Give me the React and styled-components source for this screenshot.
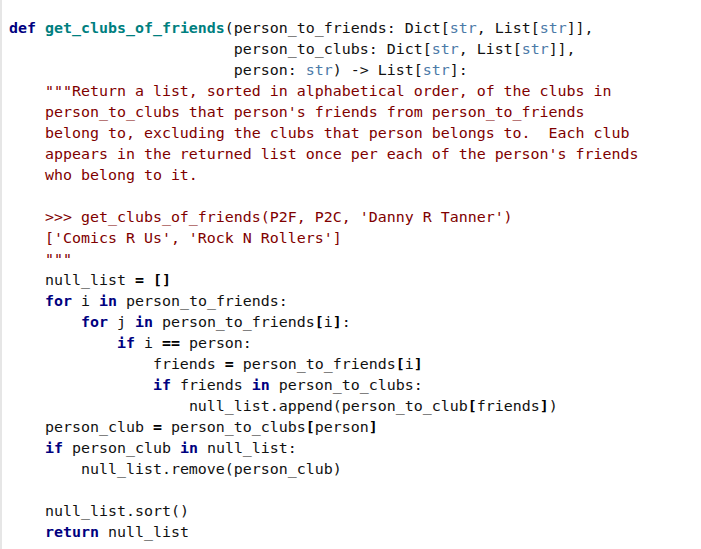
import React from "react";
import styled, { createGlobalStyle } from "styled-components";

const GlobalStyle = createGlobalStyle`
  html, body {
    margin: 0;
    padding: 0;
    background: #fff;
  }
`;

const Editor = styled.div`
  width: 701px;
  height: 549px;
  box-sizing: border-box;
  border-left: 2px solid #e6e6e6;
  background: #fff;
  padding: 18px 0 0 7px;
  overflow: hidden;
`;

const Code = styled.pre`
  margin: 0;
  font-family: "DejaVu Sans Mono", "Liberation Mono", monospace;
  font-size: 14.95px;
  line-height: 21px;
  color: #111;
  white-space: pre;
`;

const Kw = styled.span`
  color: #00007f;
  font-weight: bold;
`;

const Fn = styled.span`
  color: #007f7f;
  font-weight: bold;
`;

const Builtin = styled.span`
  color: #4c7aa8;
`;

const Doc = styled.span`
  color: #7f0000;
`;

const Op = styled.span`
  font-weight: bold;
  color: #000;
`;

export default function App() {
  return (
    <>
      <GlobalStyle />
      <Editor>
        <Code>
          <Kw>def</Kw> <Fn>get_clubs_of_friends</Fn>(person_to_friends: Dict[<Builtin>str</Builtin>, List[<Builtin>str</Builtin>]],{"\n"}
          {"                         "}person_to_clubs: Dict[<Builtin>str</Builtin>, List[<Builtin>str</Builtin>]],{"\n"}
          {"                         "}person: <Builtin>str</Builtin>) -&gt; List[<Builtin>str</Builtin>]:{"\n"}
          <Doc>{`    """Return a list, sorted in alphabetical order, of the clubs in
    person_to_clubs that person's friends from person_to_friends
    belong to, excluding the clubs that person belongs to.  Each club
    appears in the returned list once per each of the person's friends
    who belong to it.

    >>> get_clubs_of_friends(P2F, P2C, 'Danny R Tanner')
    ['Comics R Us', 'Rock N Rollers']
    """`}</Doc>{"\n"}
          {"    "}null_list <Op>=</Op> <Op>[]</Op>{"\n"}
          {"    "}<Kw>for</Kw> i <Kw>in</Kw> person_to_friends:{"\n"}
          {"        "}<Kw>for</Kw> j <Kw>in</Kw> person_to_friends<Op>[</Op>i<Op>]</Op>:{"\n"}
          {"            "}<Kw>if</Kw> i <Op>==</Op> person:{"\n"}
          {"                "}friends <Op>=</Op> person_to_friends<Op>[</Op>i<Op>]</Op>{"\n"}
          {"                "}<Kw>if</Kw> friends <Kw>in</Kw> person_to_clubs:{"\n"}
          {"                    "}null_list.append(person_to_club<Op>[</Op>friends<Op>]</Op>){"\n"}
          {"    "}person_club <Op>=</Op> person_to_clubs<Op>[</Op>person<Op>]</Op>{"\n"}
          {"    "}<Kw>if</Kw> person_club <Kw>in</Kw> null_list:{"\n"}
          {"        "}null_list.remove(person_club){"\n"}
          {"\n"}
          {"    "}null_list.sort(){"\n"}
          {"    "}<Kw>return</Kw> null_list
        </Code>
      </Editor>
    </>
  );
}
